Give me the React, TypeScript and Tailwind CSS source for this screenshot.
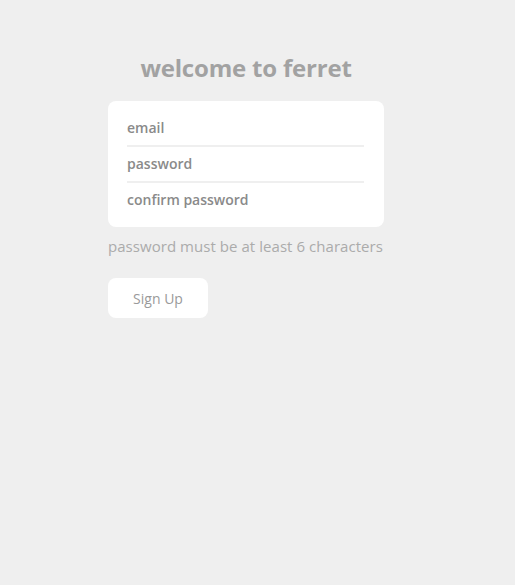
export default function App() {
  const font = { fontFamily: '"Open Sans", "DejaVu Sans", sans-serif' };
  return (
    <div className="min-h-[585px] w-full bg-[#efefef]" style={font}>
      <div className="ml-[108px] flex w-[276px] flex-col pt-[50px]">
        <h1 className="text-center text-[24px] font-bold leading-[36px] text-[#a2a2a2] tracking-[-0.2px]">welcome to ferret</h1>
        <div className="mt-[15px] flex flex-col rounded-lg bg-white pb-[8px] pl-[19px] pr-[20px] pt-[9px]">
          <div className="h-[37px] border-b-2 border-[#efefef] pt-[7px] text-[14px] font-semibold text-[#8a8a8a]">email</div>
          <div className="h-[36px] border-b-2 border-[#efefef] pt-[6px] text-[14px] font-semibold text-[#8a8a8a]">password</div>
          <div className="h-[36px] pt-[6px] text-[14px] font-semibold text-[#8a8a8a]">confirm password</div>
        </div>
        <p className="mt-[8px] whitespace-nowrap text-[15px] leading-[22px] tracking-[0.05px] text-[#ababab]">password must be at least 6 characters</p>
        <button className="mt-[21px] h-[40px] w-[100px] rounded-lg bg-white text-[14px] text-[#9a9a9a]" style={font}>Sign Up</button>
      </div>
    </div>
  );
}
